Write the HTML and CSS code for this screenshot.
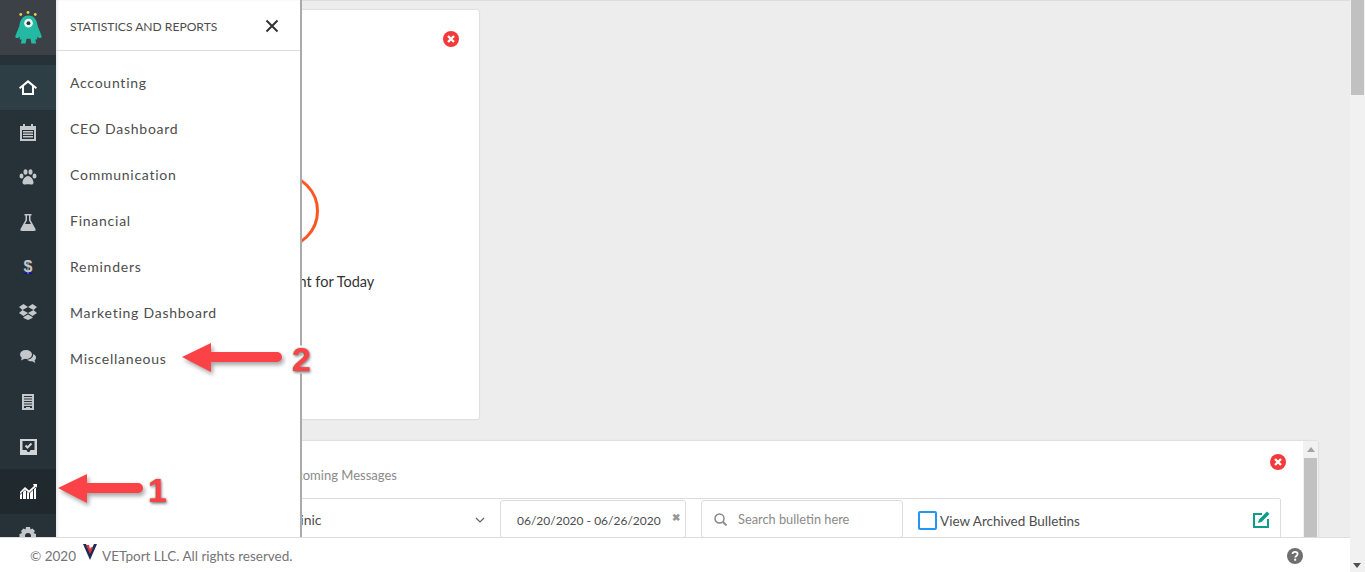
FILE: index.html
```html
<!DOCTYPE html>
<html lang="en">

<head>
    <meta charset="UTF-8">
    <title>VETport Dashboard</title>
    <link rel="stylesheet" href="styles.css">
</head>

<body>
    <!-- Sidebar -->
    <nav class="sidebar">
        <div class="logo">
            <svg width="29" height="34" viewBox="0 4.500 30 35">
                <circle cx="7" cy="8" r="1.500" fill="#e8c84a"/>
                <circle cx="14.500" cy="6" r="1.500" fill="#e8c84a"/>
                <circle cx="22" cy="8" r="1.500" fill="#e8c84a"/>
                <path d="M15 9c6 0 9 5 9.500 11l4 10c.5 2-1 3-3 2l-1.500-1v3h-2l1 4h-5l-1-5h-4l-1 5H7l1-4H6v-3l-1.500 1c-2 1-3.500 0-3-2l4-10C6 14 9 9 15 9z" fill="#24b9a3"/>
                <circle cx="15" cy="17" r="4.500" fill="#e9f5f3"/>
                <circle cx="15" cy="17" r="2" fill="#26343a"/>
            </svg>
        </div>
        <a class="nav-item active" href="#">
            <svg width="18" height="15" viewBox="0 0 18 15"><path d="M9 0 0 7.500l1.200 1.400L3 7.400V15h12V7.400l1.800 1.500L18 7.500zM9 2.700l4 3.400V13H5V6.100z" fill="#fff" fill-rule="evenodd"/></svg>
        </a>
        <a class="nav-item" href="#">
            <svg width="16" height="17" viewBox="0 0 16 17"><path d="M0 2h3V0h2v2h6V0h2v2h3v15H0zM2 6v9h12V6z" fill="#c4c8ca"/><path d="M3 7h10v1.500H3zm0 2.500h10V11H3zM3 12h10v1.500H3z" fill="#c4c8ca"/></svg>
        </a>
        <a class="nav-item" href="#">
            <svg width="18" height="16" viewBox="0 0 18 16" fill="#c4c8ca"><ellipse cx="2.500" cy="7" rx="2" ry="2.600"/><ellipse cx="6.500" cy="3" rx="2" ry="2.800"/><ellipse cx="11.500" cy="3" rx="2" ry="2.800"/><ellipse cx="15.500" cy="7" rx="2" ry="2.600"/><path d="M9 7c3 0 5.500 4 5.500 6.500 0 2-2 2.300-3 2-1.500-.4-3.500-.4-5 0-1 .3-3-.1-3-2C3.500 11 6 7 9 7z"/></svg>
        </a>
        <a class="nav-item" href="#">
            <svg width="16" height="17" viewBox="0 0 16 17"><path d="M4.500 0h7v1.500h-1V6l5 9c.5 1 0 2-1.500 2H2c-1.500 0-2-1-1.500-2l5-9V1.500h-1zM7 1.500V6.500L5 10h6L9 6.500v-5z" fill="#c4c8ca" fill-rule="evenodd"/></svg>
        </a>
        <a class="nav-item" href="#"><span class="dollar">$</span></a>
        <a class="nav-item" href="#">
            <svg width="18" height="16" viewBox="0 0 18 16" fill="#c4c8ca"><path d="M4.500 0 0 3l3.500 3L9 3zM13.500 0 9 3l5.500 3L18 3zM0 9l4.500 3L9 9 3.500 6zM9 9l4.500 3L18 9l-3.500-3z"/><path d="M4.500 13 9 10.500l4.500 2.500v1L9 16l-4.500-2z"/></svg>
        </a>
        <a class="nav-item" href="#">
            <svg width="16" height="13" viewBox="0 0 16 13" fill="#c4c8ca"><ellipse cx="6" cy="4.500" rx="6" ry="4.500"/><path d="M2 7 1 10.500 5 8.500z"/><path d="M13 4c2 .8 3 2 3 3.500 0 1.300-.8 2.300-1.500 3l.8 2.500-3-1.800c-2.300.3-4.300-.4-5.300-1.700 3.500 0 6.700-2 6-5.500z"/></svg>
        </a>
        <a class="nav-item" href="#">
            <svg width="12" height="16" viewBox="0 0 12 16"><path d="M0 0h12v16H0zM2 2v1h8V2zm0 2.500v1h8v-1zM2 7v1h8V7zm0 2.500v1h8v-1zM2 12v2h2v-1h4v1h2v-2z" fill="#c4c8ca" fill-rule="evenodd"/></svg>
        </a>
        <a class="nav-item" href="#">
            <svg width="17" height="16" viewBox="0 0 17 16"><path d="M0 0h17v16H0zM2.500 2v9h4l1 2h2l1-2h4V2z" fill="#d2d5d6" fill-rule="evenodd"/><path d="m5.500 6.500 2 2 4-4" fill="none" stroke="#d2d5d6" stroke-width="2"/></svg>
        </a>
        <a class="nav-item selected" href="#">
            <svg width="17" height="15" viewBox="0 0 17 15" fill="#fff"><path d="M0 15v-4l2-2v6zm3 0V8l2-2 1 1v8zm4 0V8l2 1v6zm3 0V9l2-2 1-1v9zm4 0V5l2-1.500V15zM0 8l5-5 4 3.500L14 2l-1-2h4v4l-1-1.500L9 9 5 5.500 0 10z"/></svg>
        </a>
        <a class="nav-item" href="#">
            <svg width="18" height="18" viewBox="0 0 18 18"><path d="M7 0h4l.5 2.500 2-1L16 4l-1.500 2 2.500 1v4l-2.500.5 1 2L13.500 16l-2-1.500L11 18H7l-.5-3.500-2 1.500L2 13.500l1-2L.5 11V7L3 6 2 4l2.500-2.500 2 1zM9 6a3 3 0 1 0 0 6 3 3 0 0 0 0-6z" fill="#c4c8ca" fill-rule="evenodd"/></svg>
        </a>
    </nav>

    <!-- Main content -->
    <main class="content">
        <section class="card appt-card">
            <svg class="remove-icon" width="16" height="16" viewBox="0 0 16 16"><circle cx="8" cy="8" r="8" fill="#f5393a"/><path d="m5 5 6 6m0-6-6 6" stroke="#fff" stroke-width="2.400"/></svg>
            <div class="appt-ring"></div>
            <p class="appt-text">No Appointment for Today</p>
        </section>

        <section class="card bulletin-card">
            <div class="bulletin-body">
                <svg class="remove-icon" width="16" height="16" viewBox="0 0 16 16"><circle cx="8" cy="8" r="8" fill="#f5393a"/><path d="m5 5 6 6m0-6-6 6" stroke="#fff" stroke-width="2.400"/></svg>
                <h3 class="bulletin-title">Upcoming Messages</h3>
                <div class="filter-row">
                    <div class="filter-select">
                        <span>All Clinic</span>
                        <svg width="10" height="6" viewBox="0 0 10 6"><path d="m1 1 4 4 4-4" fill="none" stroke="#666" stroke-width="1.200"/></svg>
                    </div>
                    <div class="filter-date">
                        <span>06/20/2020 - 06/26/2020</span>
                        <b class="date-clear">&#10006;</b>
                    </div>
                    <div class="filter-search">
                        <svg width="13" height="13" viewBox="0 0 13 13"><circle cx="5.500" cy="5.500" r="4.500" fill="none" stroke="#888" stroke-width="1.500"/><path d="m9 9 3.500 3.500" stroke="#888" stroke-width="1.800"/></svg>
                        <span>Search bulletin here</span>
                    </div>
                    <label class="filter-check"><i class="checkbox"></i>View Archived Bulletins</label>
                    <svg class="edit-icon" width="17" height="17" viewBox="0 0 17 17"><path d="M9 3H1v13h14V8" fill="none" stroke="#0f9d8a" stroke-width="2"/><path d="M14 .5 16.500 3l-8 8-3.500 1 1-3.500z" fill="#0f9d8a"/></svg>
                </div>
            </div>
            <div class="inner-scroll">
                <div class="arrow-up"></div>
                <div class="inner-thumb"></div>
            </div>
        </section>
    </main>

    <!-- Page scrollbar -->
    <div class="page-scroll">
        <div class="page-thumb"></div>
        <div class="arrow-down"></div>
    </div>

    <!-- Statistics menu -->
    <aside class="stats-panel">
        <div class="stats-head">
            <span>STATISTICS AND REPORTS</span>
            <svg width="14" height="14" viewBox="0 0 14 14"><path d="m1.500 1.500 11 11m0-11-11 11" stroke="#333" stroke-width="2"/></svg>
        </div>
        <ul class="stats-list">
            <li>Accounting</li>
            <li>CEO Dashboard</li>
            <li>Communication</li>
            <li>Financial</li>
            <li>Reminders</li>
            <li>Marketing Dashboard</li>
            <li>Miscellaneous</li>
        </ul>
    </aside>

    <!-- Footer -->
    <footer class="footer">
        <span>&copy; 2020</span>
        <svg class="footer-logo" width="14" height="16" viewBox="0 0 14 16"><path d="M0 0h3l4 8 4-8h3L7 16z" fill="#1d2a52"/><path d="M3 1h3l1 4 1-2 2 1-3 6z" fill="#d8333c"/></svg>
        <span>VETport LLC. All rights reserved.</span>
        <svg class="help-icon" width="16" height="16" viewBox="0 0 16 16"><circle cx="8" cy="8" r="8" fill="#6f6f6f"/><path d="M5.500 6C5.500 4.500 6.700 3.800 8 3.800s2.600.8 2.600 2.200c0 1.900-2.400 1.900-2.400 3.600" fill="none" stroke="#fff" stroke-width="1.800"/><rect x="7.200" y="10.700" width="2" height="2" fill="#fff"/></svg>
    </footer>

    <!-- Annotations -->
    <div class="callout callout-one">
        <svg width="89" height="34" viewBox="0 0 89 34"><path d="M1 15 30 1v9h51a5 5 0 0 1 0 10H30v10z" fill="#fb4247"/></svg>
        <span>1</span>
    </div>
    <div class="callout callout-two">
        <svg width="105" height="34" viewBox="0 0 105 34"><path d="M1 15 30 1v9h66a5 5 0 0 1 0 10H30v10z" fill="#fb4247"/></svg>
        <span>2</span>
    </div>
</body>

</html>
```

FILE: styles.css
```css
/* Global Styles */
html,
body {
    height: 572px;
    overflow: hidden;
}

body {
    display: flex;
    margin: 0;
    font-family: "Lato", "Noto Sans", sans-serif;
    font-size: 14px;
    color: #4d4d4d;
    background-color: #ededed;
}

/* Sidebar */
.sidebar {
    flex: 0 0 56px;
    background-color: #263238;
}

.logo {
    display: flex;
    justify-content: center;
    align-items: center;
    height: 55px;
    margin-bottom: 10px;
    background-color: #3b4146;
}

.nav-item {
    display: flex;
    justify-content: center;
    align-items: center;
    height: 44.900px;
}

.nav-item.active {
    background-color: #2d3e45;
}

.nav-item.selected {
    background-color: #20292e;
}

.dollar {
    font-family: "Liberation Sans", sans-serif;
    font-weight: bold;
    font-size: 16px;
    color: #c4c8ca;
}

/* Main content */
.content {
    flex: 1;
    padding: 9px 32px 0 27px;
    border-top: 1px solid #ddd;
}

.card {
    position: relative;
    background-color: #fff;
    border-radius: 2px;
    box-shadow: 0 0 2px rgba(0, 0, 0, 0.2);
}

.remove-icon {
    position: absolute;
}

.appt-card {
    width: 396px;
    height: 409px;
    margin-bottom: 22px;
    padding-top: 163px;
    box-sizing: border-box;
    text-align: center;
}

.appt-card .remove-icon {
    top: 21px;
    right: 20px;
}

.appt-ring {
    width: 70px;
    height: 70px;
    margin: 0 auto;
    border: 3px solid #ff5722;
    border-radius: 50%;
}

.appt-text {
    margin: 24px 0 0;
    padding-left: 18px;
    font-size: 14.500px;
    color: #333;
}

.bulletin-card {
    display: flex;
    height: 140px;
}

.bulletin-body {
    position: relative;
    flex: 1;
    padding: 26px 22px 0 20px;
}

.bulletin-body .remove-icon {
    top: 13px;
    right: 17px;
}

.bulletin-title {
    margin: 0 0 15px;
    padding-left: 177px;
    font-size: 13px;
    font-weight: normal;
    color: #8a8a8a;
}

.filter-row {
    display: flex;
    align-items: flex-start;
    height: 80px;
    border: 1px solid #ddd;
    border-radius: 2px;
}

.filter-select {
    display: flex;
    justify-content: space-between;
    align-items: center;
    width: 396px;
    height: 41px;
    padding: 0 15px 0 164px;
    box-sizing: border-box;
}

.filter-date {
    display: flex;
    justify-content: space-between;
    width: 186px;
    height: 38px;
    margin: 1px 15px 0 0;
    padding: 12px 5px 0 16px;
    box-sizing: border-box;
    border: 1px solid #ddd;
    border-radius: 3px;
    font-size: 12px;
    white-space: nowrap;
}

.date-clear {
    font-size: 10px;
    color: #999;
    margin-top: -2px;
}

.filter-search {
    display: flex;
    align-items: center;
    gap: 11px;
    width: 202px;
    height: 38px;
    margin-top: 1px;
    padding: 0 12px;
    box-sizing: border-box;
    border: 1px solid #ddd;
    border-radius: 3px;
    font-size: 12.800px;
    color: #8a8a8a;
}

.filter-check {
    display: flex;
    align-items: center;
    gap: 3px;
    margin: 12px 0 0 15px;
    font-size: 13.500px;
    line-height: 16px;
}

.checkbox {
    width: 15px;
    height: 15px;
    border: 2px solid #2196f3;
    border-radius: 2px;
}

.edit-icon {
    margin: 12px 10px 0 auto;
}

.inner-scroll {
    flex: 0 0 15px;
    background-color: #f1f1f1;
}

.arrow-up {
    width: 0;
    margin: 6px auto 6px;
    border: 4px solid transparent;
    border-top: 0;
    border-bottom: 5px solid #a3a3a3;
}

.inner-thumb {
    height: 100px;
    margin: 0 1px;
    background-color: #c1c1c1;
}

/* Page scrollbar */
.page-scroll {
    position: relative;
    flex: 0 0 15px;
    background-color: #f1f1f1;
}

.page-thumb {
    height: 95px;
    margin: 0 1px;
    background-color: #c1c1c1;
}

.arrow-down {
    position: absolute;
    left: 3px;
    bottom: 4px;
    border: 4px solid transparent;
    border-bottom: 0;
    border-top: 5px solid #505050;
}

/* Statistics menu */
.stats-panel {
    position: absolute;
    top: 0;
    left: 56px;
    width: 244px;
    height: 572px;
    background-color: #fff;
    border-right: 2px solid #aaa;
    box-shadow: inset 2px 0 2px rgba(0, 0, 0, 0.08);
}

.stats-head {
    display: flex;
    justify-content: space-between;
    align-items: center;
    height: 51px;
    padding: 2px 21px 0 14px;
    box-sizing: border-box;
    border-bottom: 1px solid #ddd;
    font-size: 12.100px;
}

.stats-list {
    list-style-type: none;
    margin: 0;
    padding: 9px 0 0 14px;
}

.stats-list li {
    height: 46px;
    line-height: 45px;
    font-size: 14px;
    letter-spacing: 0.750px;
}

/* Footer */
.footer {
    position: absolute;
    left: 0;
    bottom: 0;
    display: flex;
    align-items: center;
    gap: 5px;
    width: 1350px;
    height: 35px;
    padding: 2px 47px 0 30px;
    box-sizing: border-box;
    background-color: #fff;
    border-top: 1px solid #ddd;
    font-size: 13.500px;
    color: #757575;
}

.footer-logo {
    margin: 0 0 8px 2px;
}

.help-icon {
    margin-left: auto;
}

/* Annotations */
.callout {
    position: absolute;
    display: flex;
    align-items: center;
}

.callout svg {
    filter: drop-shadow(2px 3px 2px rgba(0, 0, 0, 0.35));
}

.callout span {
    margin-left: 2px;
    font-family: "Liberation Sans", sans-serif;
    font-size: 34px;
    font-weight: bold;
    line-height: 34px;
    color: #fb4247;
    -webkit-text-stroke: 5px #fff;
    paint-order: stroke fill;
    text-shadow: 0 0 2px rgba(0, 0, 0, 0.5), 1px 2px 3px rgba(0, 0, 0, 0.4);
}

.callout-one {
    top: 473px;
    left: 57px;
}

.callout-two {
    top: 342px;
    left: 181px;
}

.callout-two span {
    margin-left: 6px;
}
```
